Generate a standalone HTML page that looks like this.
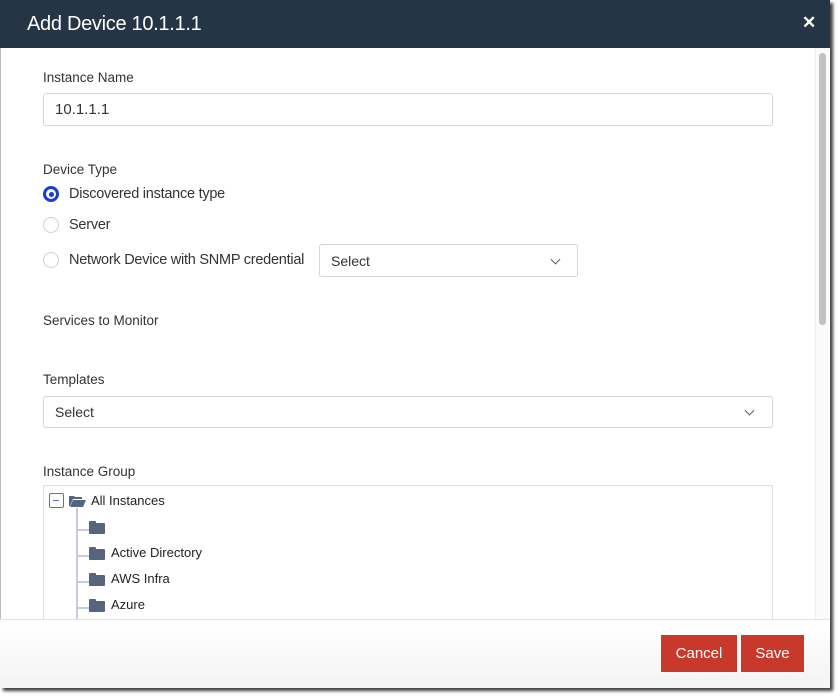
<!DOCTYPE html>
<html><head><style>
*{box-sizing:border-box;margin:0;padding:0}
body{width:840px;height:697px;background:#fff;font-family:"Liberation Sans",sans-serif;position:relative;overflow:hidden;color:#333}
.modal{position:absolute;left:0;top:0;width:830px;height:688px;background:#fff;box-shadow:3px 3px 3px rgba(0,0,0,.75),inset 1px 0 0 #bbb}
.hdr{position:absolute;left:0;top:0;width:830px;height:48px;background:#263545;color:#fff}
.hdr h1{position:absolute;left:27px;top:13px;font-size:20px;font-weight:normal;letter-spacing:-.3px}
.hdr .x{position:absolute;left:802px;top:13px;font-size:17px;font-weight:bold}
.sb{position:absolute;left:815px;top:48px;width:14px;height:571px;background:#fafafa;border-left:1px solid #eee}
.sb div{position:absolute;left:3px;top:5px;width:7px;height:272px;background:#c1c1c1;border-radius:4px}
.lbl{position:absolute;left:43px;font-size:13.5px;color:#333}
.inp{position:absolute;border:1px solid #d5d5d5;border-radius:3px;background:#fff;font-size:14px;color:#333}
.radio{position:absolute;left:43px;width:16px;height:16px;border:1.5px solid #d0d0d0;border-radius:50%}
.radio.on{border:3px solid #1a3bd9}
.radio.on:after{content:"";position:absolute;left:2.5px;top:2.5px;width:5px;height:5px;border-radius:50%;background:#1a3bd9}
.rt{position:absolute;left:69px;font-size:14.5px;letter-spacing:-.25px;color:#333}
.chev{position:absolute;top:50%;width:7px;height:7px;border-right:1.3px solid #555;border-bottom:1.3px solid #555;transform:translateY(-70%) rotate(45deg)}
.tree{position:absolute;left:43px;top:485px;width:730px;height:140px;border:1px solid #ddd;border-bottom:none}
.fold{position:absolute;width:16px;height:11px;background:#56657f;border-radius:1px}
.fold:before{content:"";position:absolute;left:0;top:-2px;width:7px;height:3px;background:#56657f;border-radius:1px 1px 0 0}
.tt{position:absolute;font-size:13px;color:#222}
.foot{position:absolute;left:0;top:619px;width:830px;height:69px;border-top:1px solid #e3e3e3;background:linear-gradient(#fff,#f3f3f3)}
.btn{position:absolute;top:15px;height:37px;background:#c9392b;color:#fff;font-size:15px;text-align:center;line-height:37px}
</style></head><body>
<div class="modal">
<div class="hdr"><h1>Add Device 10.1.1.1</h1><span class="x">✕</span></div>
<div class="sb"><div></div></div>
<div class="lbl" style="top:70px">Instance Name</div>
<div class="inp" style="left:43px;top:93px;width:730px;height:33px;padding:7px 11px;font-size:15px">10.1.1.1</div>
<div class="lbl" style="top:162px">Device Type</div>
<div class="radio on" style="top:186px"></div><div class="rt" style="top:186px">Discovered instance type</div>
<div class="radio" style="top:217px"></div><div class="rt" style="top:217px">Server</div>
<div class="radio" style="top:252px"></div><div class="rt" style="top:252px">Network Device with SNMP credential</div>
<div class="inp" style="left:319px;top:244px;width:259px;height:33px;padding:8px 11px">Select<span class="chev" style="left:232px"></span></div>
<div class="lbl" style="top:313px">Services to Monitor</div>
<div class="lbl" style="top:372px">Templates</div>
<div class="inp" style="left:43px;top:396px;width:730px;height:32px;padding:7px 11px">Select<span class="chev" style="left:702px"></span></div>
<div class="lbl" style="top:464px">Instance Group</div>
<div class="tree">
<div style="position:absolute;left:5px;top:7px;width:15px;height:15px;border:1.5px solid #5a6fc0;border-radius:2px"><div style="position:absolute;left:3px;top:5.5px;width:6px;height:1.5px;background:#5a6fc0"></div></div>
<svg style="position:absolute;left:25px;top:9px" width="17" height="12"><path d="M0 1h5l1 1h7v2H4L1 11H0z M4 5h13l-3 7H1z" fill="#56657f"/></svg>
<div class="tt" style="left:47px;top:7px">All Instances</div>
<div style="position:absolute;left:32px;top:22px;width:1.5px;height:118px;background:#c5cce0"></div>
<div style="position:absolute;left:33px;top:43px;width:12px;height:1.5px;background:#c5cce0"></div>
<div style="position:absolute;left:33px;top:69px;width:12px;height:1.5px;background:#c5cce0"></div>
<div style="position:absolute;left:33px;top:95px;width:12px;height:1.5px;background:#c5cce0"></div>
<div style="position:absolute;left:33px;top:121px;width:12px;height:1.5px;background:#c5cce0"></div>
<div class="fold" style="left:45px;top:37px"></div>
<div class="fold" style="left:45px;top:63px"></div><div class="tt" style="left:67px;top:59px">Active Directory</div>
<div class="fold" style="left:45px;top:89px"></div><div class="tt" style="left:67px;top:85px">AWS Infra</div>
<div class="fold" style="left:45px;top:115px"></div><div class="tt" style="left:67px;top:111px">Azure</div>
</div>
<div class="foot">
<div class="btn" style="left:661px;width:76px">Cancel</div>
<div class="btn" style="left:741px;width:63px">Save</div>
</div>
</div>
</body></html>
